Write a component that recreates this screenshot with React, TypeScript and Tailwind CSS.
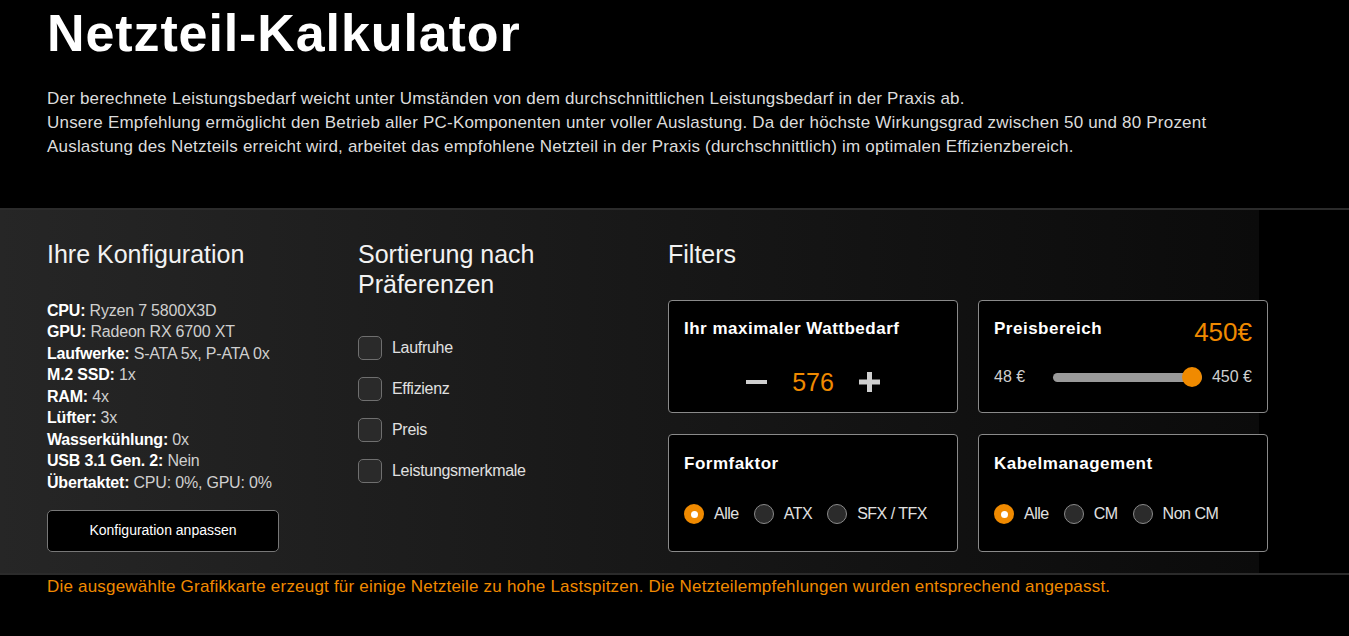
const config = [
  ["CPU:", "Ryzen 7 5800X3D"],
  ["GPU:", "Radeon RX 6700 XT"],
  ["Laufwerke:", "S-ATA 5x, P-ATA 0x"],
  ["M.2 SSD:", "1x"],
  ["RAM:", "4x"],
  ["Lüfter:", "3x"],
  ["Wasserkühlung:", "0x"],
  ["USB 3.1 Gen. 2:", "Nein"],
  ["Übertaktet:", "CPU: 0%, GPU: 0%"],
];

const prefs = ["Laufruhe", "Effizienz", "Preis", "Leistungsmerkmale"];

function Radio({ label, checked }: { label: string; checked?: boolean }) {
  return (
    <label className="flex items-center gap-[10px]">
      {checked ? (
        <span className="flex h-[20px] w-[20px] items-center justify-center rounded-full bg-[#f08a00]">
          <span className="h-[7px] w-[7px] rounded-full bg-white" />
        </span>
      ) : (
        <span className="h-[20px] w-[20px] rounded-full border-[1.5px] border-[#8a8a8a] bg-[#2b2b2b]" />
      )}
      <span className="text-[16px] tracking-[-0.5px] text-[#e0e0e0]">{label}</span>
    </label>
  );
}

function Card({ title, children, pad }: { title: string; children: React.ReactNode; pad: string }) {
  return (
    <div className={`rounded-[4px] border border-[#8a8a8a] bg-black px-[15px] ${pad}`}>
      <h4 className="text-[17px] font-bold leading-[20px] tracking-[0.5px] text-white">{title}</h4>
      {children}
    </div>
  );
}

export default function App() {
  return (
    <div className="min-h-[636px] bg-black font-['Liberation_Sans',Arial,sans-serif] text-white">
      <div className="px-[47px] pt-[7px]">
        <h1 className="text-[52px] font-bold leading-none tracking-[0.9px]">Netzteil-Kalkulator</h1>
        <p className="mt-[28px] text-[17px] leading-[24px] tracking-[0.2px] text-[#dcdcdc]">
          Der berechnete Leistungsbedarf weicht unter Umständen von dem durchschnittlichen Leistungsbedarf in der Praxis ab.
          <br />
          Unsere Empfehlung ermöglicht den Betrieb aller PC-Komponenten unter voller Auslastung. Da der höchste Wirkungsgrad zwischen 50 und 80 Prozent
          <br />
          Auslastung des Netzteils erreicht wird, arbeitet das empfohlene Netzteil in der Praxis (durchschnittlich) im optimalen Effizienzbereich.
        </p>
      </div>

      <section className="mt-[49px] border-y-2 border-[#2b2b2b]">
        <div className="flex h-[363px] w-[1259px] bg-gradient-to-r from-[#262626] to-[#0b0b0b] pl-[47px] pt-[29px]">
          {/* Konfiguration */}
          <div className="w-[311px] shrink-0">
            <h3 className="text-[25px] leading-[30px] text-[#f2f2f2]">Ihre Konfiguration</h3>
            <ul className="mt-[31px] text-[16px] leading-[21.43px] tracking-[-0.2px]">
              {config.map(([k, v]) => (
                <li key={k}>
                  <span className="font-bold text-white">{k}</span>{" "}
                  <span className="text-[#cfcfcf]">{v}</span>
                </li>
              ))}
            </ul>
            <button className="mt-[17px] h-[42px] w-[232px] rounded-[5px] border border-[#777] bg-black text-[14px] text-white">
              Konfiguration anpassen
            </button>
          </div>

          {/* Sortierung */}
          <div className="w-[310px] shrink-0">
            <h3 className="text-[25px] leading-[30px] text-[#f2f2f2]">
              Sortierung nach
              <br />
              Präferenzen
            </h3>
            <div className="mt-[37px] flex flex-col gap-[17px]">
              {prefs.map((p) => (
                <label key={p} className="flex items-center gap-[10px]">
                  <span className="h-[24px] w-[24px] rounded-[5px] border border-[#6f6f6f] bg-[#2a2a2a]" />
                  <span className="text-[16px] tracking-[-0.3px] text-[#e0e0e0]">{p}</span>
                </label>
              ))}
            </div>
          </div>

          {/* Filters */}
          <div className="w-[600px] shrink-0">
            <h3 className="text-[25px] leading-[30px] text-[#f2f2f2]">Filters</h3>
            <div className="mt-[31px] grid grid-cols-[290px_290px] grid-rows-[113px_118px] gap-x-[20px] gap-y-[21px]">
              <Card title="Ihr maximaler Wattbedarf" pad="pt-[18px]">
                <div className="mt-[28px] flex items-center justify-center gap-[25px]">
                  <span className="h-[4px] w-[21px] bg-[#cfcfcf]" />
                  <span className="text-[25px] leading-[30px] text-[#f08a00]">576</span>
                  <svg width="21" height="20" viewBox="0 0 21 20">
                    <rect x="8" y="0" width="5" height="20" fill="#cfcfcf" />
                    <rect x="0" y="7.5" width="21" height="5" fill="#cfcfcf" />
                  </svg>
                </div>
              </Card>

              <div className="rounded-[4px] border border-[#8a8a8a] bg-black px-[15px] pt-[16px]">
                <div className="flex items-start justify-between">
                  <h4 className="mt-[2px] text-[17px] font-bold leading-[20px] tracking-[0.5px] text-white">Preisbereich</h4>
                  <span className="text-[26px] leading-[30px] text-[#f08a00]">450€</span>
                </div>
                <div className="mt-[18px] flex items-center">
                  <span className="w-[59px] text-[16px] text-[#cfcfcf]">48 €</span>
                  <div className="relative flex h-[20px] w-[149px] items-center">
                    <div className="h-[9px] w-full rounded-full bg-[#9a9a9a]" />
                    <span className="absolute right-0 top-0 h-[20px] w-[20px] rounded-full bg-[#f08a00]" />
                  </div>
                  <span className="ml-auto text-[16px] text-[#cfcfcf]">450 €</span>
                </div>
              </div>

              <Card title="Formfaktor" pad="pt-[19px]">
                <div className="mt-[28px] flex items-center gap-[15px]">
                  <Radio label="Alle" checked />
                  <Radio label="ATX" />
                  <Radio label="SFX / TFX" />
                </div>
              </Card>

              <Card title="Kabelmanagement" pad="pt-[19px]">
                <div className="mt-[28px] flex items-center gap-[15px]">
                  <Radio label="Alle" checked />
                  <Radio label="CM" />
                  <Radio label="Non CM" />
                </div>
              </Card>
            </div>
          </div>
        </div>
      </section>

      <p className="px-[47px] text-[17px] leading-[24px] tracking-[0.2px] text-[#f08a00]">
        Die ausgewählte Grafikkarte erzeugt für einige Netzteile zu hohe Lastspitzen. Die Netzteilempfehlungen wurden entsprechend angepasst.
      </p>
    </div>
  );
}
